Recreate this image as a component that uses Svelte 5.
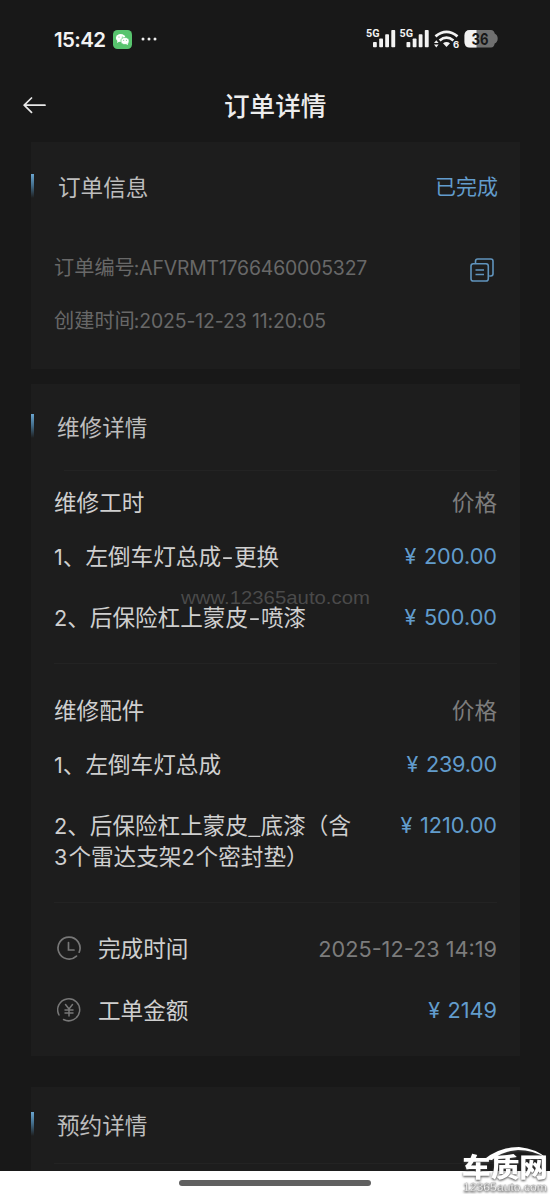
<script>
  const labour = [
    { a: '1', b: '左倒车灯总成', c: '更换', price: '200.00' },
    { a: '2', b: '后保险杠上蒙皮', c: '喷漆', price: '500.00' }
  ];
</script>

<div class="screen">
  <div class="status">
    <span class="clock">15:42</span>
    <svg class="wechat" width="19" height="19" viewBox="0 0 19 19">
      <rect width="19" height="19" rx="4.5" fill="#58c46e" />
      <ellipse cx="7.7" cy="8" rx="4.8" ry="4" fill="#fff" />
      <path d="M4.5 10.5L4 13l2.5-1.5z" fill="#fff" />
      <ellipse cx="12" cy="11" rx="4.1" ry="3.5" fill="#fff" stroke="#58c46e" stroke-width=".7" />
      <path d="M13 14l2 1-.3-2z" fill="#fff" />
      <g fill="#58c46e"><circle cx="6" cy="7" r=".6" /><circle cx="9.3" cy="7" r=".6" /><circle cx="10.7" cy="10.2" r=".5" /><circle cx="13.4" cy="10.2" r=".5" /></g>
    </svg>
    <svg class="dots" width="16" height="4" viewBox="0 0 16 4" fill="#eee"><circle cx="2" cy="2" r="1.5" /><circle cx="8" cy="2" r="1.5" /><circle cx="14" cy="2" r="1.5" /></svg>
    <svg class="signals" width="134" height="24" viewBox="364 26 134 24">
      <g fill="#f2f2f2">
        {#each [0, 33.5] as dx}
          <text x={366 + dx} y="36.5" textLength="13.500" lengthAdjust="spacingAndGlyphs" class="five">5G</text>
          <rect x={373 + dx} y="42" width="3.8" height="5.300" rx=".8" />
          <rect x={379.2 + dx} y="38.5" width="3.8" height="8.800" rx=".8" />
          <rect x={385.2 + dx} y="34.3" width="3.8" height="13" rx=".8" />
          <rect x={391.3 + dx} y="30" width="3.9" height="17.300" rx=".8" />
        {/each}
        <path d="M443 43.2Q446.5 40.6 450 43.2L446.5 47z" />
        <path d="M434 43l2.3-2.8 2.3 2.8zM434 44.600l2.3 2.8 2.3-2.8z" />
        <text x="453" y="48" class="six">6</text>
      </g>
      <g fill="none" stroke="#f2f2f2" stroke-width="2.8"><path d="M435.5 36.3Q446.5 27.5 457.5 36.3" /><path d="M439.6 40.5Q446.5 34.8 453.4 40.5" /></g>
      <path d="M470 30h21q3 0 3.7 3.5 3 1.500 3 5t-3 5q-.7 4-3.7 4h-21q-5.500 0-5.500-5.500v-6.500q0-5.500 5.500-5.500z" fill="#707070" />
      <path d="M476.500 30H470q-5.500 0-5.500 5.500V42q0 5.500 5.500 5.500h6.500z" fill="#f2f2f2" />
      <text x="471.500" y="44.600" textLength="17" lengthAdjust="spacingAndGlyphs" class="charge">36</text>
    </svg>
  </div>

  <div class="nav">
    <svg width="24" height="18" viewBox="0 0 24 18" fill="none" stroke="#e8e8e8" stroke-width="1.7" stroke-linecap="round" stroke-linejoin="round"><path d="M22 9.200H1.200M8.500 2L1.200 9.200l7.300 7.200" /></svg>
    <h1>订单详情</h1>
  </div>

  <section class="card info">
    <div class="head"><i></i><h2>订单信息</h2><span class="done">已完成</span></div>
    <div class="meta first">
      <span>订单编号<b class="id">:AFVRMT1766460005327</b></span>
      <svg width="24" height="24" viewBox="0 0 24 24" fill="none" stroke="#6094bd" stroke-width="1.600"><path d="M5.500 5V3.200Q5.500 1 7.700 1H20.800Q23 1 23 3.200V15.800Q23 18 20.800 18H19.200" /><rect x="1" y="5.700" width="17.300" height="17.300" rx="2.300" /><path d="M5.500 12h8.500M5.500 16.500h8.500" /></svg>
    </div>
    <div class="meta"><span>创建时间<b class="made">:2025-12-23 11:20:05</b></span></div>
  </section>

  <section class="card repair">
    <div class="head"><i></i><h2>维修详情</h2></div>
    <hr class="short" />
    <div class="row group"><span>维修工时</span><span class="grey">价格</span></div>
    {#each labour as item, k}
      <div class="row" class:next={k > 0}>
        <span><b>{item.a}</b>、{item.b}<b class="dash">-</b>{item.c}</span>
        <span class="price"><em>¥</em><b>{item.price}</b></span>
      </div>
    {/each}
    <hr class="mid" />
    <div class="row"><span>维修配件</span><span class="grey">价格</span></div>
    <div class="row part"><span><b>1</b>、左倒车灯总成</span><span class="price"><em>¥</em><b class="tight">239.00</b></span></div>
    <div class="row long">
      <span><b>2</b>、后保险杠上蒙皮_底漆（含<br /><b class="wide">3</b>个雷达支架<b class="wide">2</b>个密封垫）</span>
      <span class="price"><em>¥</em><b>1210.00</b></span>
    </div>
    <hr class="last" />
    <div class="row total">
      <svg width="24" height="24" viewBox="0 0 24 24" fill="none" stroke="#777" stroke-width="1.700" stroke-linecap="round"><path d="M19.500 20.100A11 11 0 1 1 22.200 16.200" /><path d="M11.500 6.500V14h5.500" /></svg>
      <span class="label">完成时间</span><span class="grey"><b>2025-12-23 14:19</b></span>
    </div>
    <div class="row total next">
      <svg width="24" height="24" viewBox="0 0 24 24" fill="none" stroke="#777" stroke-width="1.500" stroke-linecap="round"><path d="M2 17A11 11 0 1 1 6.500 21.500" /><path d="M8.500 6.500L12 11l3.500-4.500M12 11v7M8 12h8M8 15h8" /></svg>
      <span class="label">工单金额</span><span class="price"><em>¥</em><b>2149</b></span>
    </div>
    <svg class="mark" width="192" height="26" viewBox="0 0 192 26"><text x="1" y="20" textLength="189" lengthAdjust="spacingAndGlyphs">www.12365auto.com</text></svg>
  </section>

  <section class="card booking">
    <div class="head"><i></i><h2>预约详情</h2></div>
    <hr />
  </section>

  <div class="homebar"><span></span></div>
  <svg class="logo" width="92" height="50" viewBox="458 1144 92 50">
    <text class="site" x="463" y="1191" textLength="84" lengthAdjust="spacingAndGlyphs">12365auto.com</text>
    <text class="brand" x="462" y="1177" textLength="86" lengthAdjust="spacingAndGlyphs">车质网</text>
    <path d="M484 1159.500Q499 1147 519 1147 537 1149 546 1158 533 1150 518 1150 502 1151 492 1160z" fill="#fff" />
  </svg>
</div>

<style>
  :global(body) { background: #181818; }
  .screen {
    position: relative;
    width: 550px;
    height: 1194px;
    overflow: hidden;
    background: #181818;
    display: flex;
    flex-direction: column;
    font-family: "Noto Sans CJK SC", sans-serif;
    font-size: 22.6px;
    color: #cfcfcf;
  }
  .status { display: flex; align-items: center; height: 78px; padding: 0 52px 0 54px; }
  .clock { width: 59px; font: 600 20.500px Inter, sans-serif; letter-spacing: -.6px; color: #f2f2f2; }
  .dots { margin-left: 9px; }
  .signals { margin-left: auto; margin-top: -2px; }
  .five { font: 700 10.500px Roboto, sans-serif; }
  .six { font: 700 9.500px Inter, sans-serif; }
  .charge { font: 700 16px Inter, sans-serif; fill: #181818; }
  .nav { display: flex; align-items: center; height: 54px; padding-left: 23px; margin-bottom: 10px; }
  h1 { margin: 0 0 0 177px; font-size: 25.600px; line-height: 54px; font-weight: 500; color: #ededed; }
  .card { position: relative; flex: none; box-sizing: border-box; width: 489px; margin-left: 31px; background: #1d1d1d; }
  .info { height: 227px; margin-bottom: 15px; }
  .repair { height: 672px; margin-bottom: 31px; }
  .booking { height: 84px; }
  .head { display: flex; align-items: center; height: 86px; padding-right: 22px; }
  .info .head { height: 90px; }
  .booking .head { height: 76px; }
  .head i { width: 3px; height: 24px; margin-top: -2px; background: linear-gradient(#6aa5cf, #44708f 45%, #1d1d1d); }
  h2 { margin: 0 0 0 23px; font-size: 22.600px; line-height: 32px; font-weight: 400; color: #bdbdbd; }
  .info h2 { margin-left: 24px; }
  .done { margin: -4px 0 0 auto; font-size: 21px; line-height: 32px; color: #629ccc; }
  .meta { display: flex; align-items: center; justify-content: space-between; height: 53px; padding: 0 26px 0 23px; font-size: 20.200px; color: #686868; }
  .meta.first { margin-top: 8px; }
  .meta svg { margin-top: 6px; }
  b { font: 400 .96em/1 Inter, sans-serif; }
  .id { letter-spacing: -.16px; margin-left: -1px; }
  .made { letter-spacing: -.1px; margin-left: -1px; }
  .dash { display: inline-block; width: 13px; text-align: center; transform: scaleX(1.250); }
  .tight { letter-spacing: -.25px; }
  .wide { margin-right: 1px; }
  hr { height: 1px; margin: 0 23px; border: 0; background: #232323; }
  hr.short { margin-left: 33px; }
  hr.mid { margin-top: 23px; margin-bottom: 23px; }
  hr.last { margin-top: 31px; margin-bottom: 22px; }
  .row { display: flex; align-items: center; justify-content: space-between; height: 46px; padding: 0 23px; line-height: 30.500px; white-space: nowrap; }
  .row.group { height: 62px; }
  .row.next { margin-top: 15px; }
  .row.total.next { margin-top: 16px; }
  .row.part { margin-top: 8px; }
  .row.long { height: 61px; margin-top: 23px; align-items: flex-start; }
  .row.long .price { margin-top: 2px; }
  .grey { color: #7c7c7c; }
  .price { color: #629ccc; display: flex; align-items: baseline; }
  .price em { font: 400 21.500px Inter, sans-serif; margin-right: 7.500px; }
  .total { justify-content: flex-start; padding-left: 26px; }
  .label { margin-left: 17px; margin-right: auto; }
  .mark { position: absolute; left: 149px; top: 200px; }
  .mark text { font: 18px "Liberation Sans", sans-serif; fill: #5a5a5a; fill-opacity: .75; }
  .homebar { display: flex; justify-content: center; height: 23px; background: #fff; padding-top: 9px; box-sizing: border-box; }
  .homebar span { width: 192px; height: 6px; border-radius: 3px; background: #606060; }
  .logo { position: absolute; right: 0; bottom: 0; filter: drop-shadow(.5px 1px .8px #444); }
  .brand { font: 900 26px "Noto Sans CJK SC", sans-serif; fill: #fff; }
  .site { font: 11.500px "Liberation Sans", sans-serif; fill: #fff; stroke: #aaa; stroke-width: .3px; }
</style>
